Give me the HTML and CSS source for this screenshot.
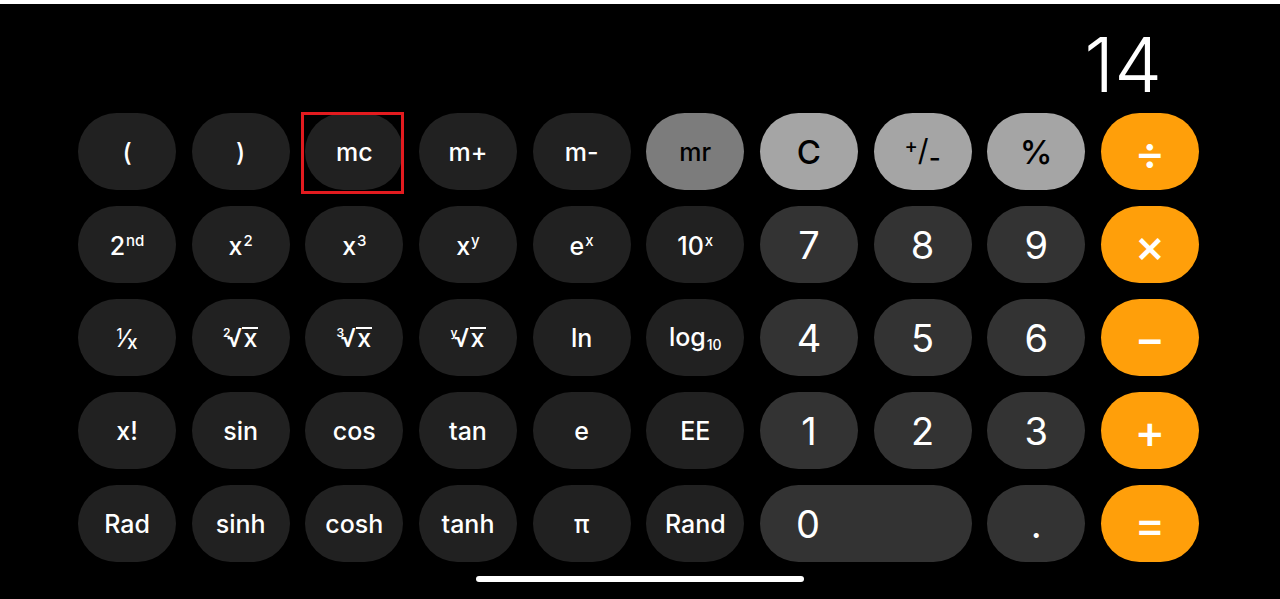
FILE: index.html
```html
<!DOCTYPE html>
<html lang="en">
<head>
<meta charset="utf-8">
<title>Calculator</title>
<link rel="stylesheet" href="styles.css">
</head>
<body>
<div class="topbar"></div>
<div class="display">14</div>
<div class="keys">
  <div class="key">(</div>
  <div class="key">)</div>
  <div class="key hl">mc</div>
  <div class="key">m+</div>
  <div class="key">m-</div>
  <div class="key mr">mr</div>
  <div class="key light big">C</div>
  <div class="key light"><span class="lbl"><span class="pm-plus">+</span><span class="pm-slash">/</span><span class="pm-minus">-</span></span></div>
  <div class="key light big">%</div>
  <div class="key op">÷</div>

  <div class="key"><span class="lbl">2<span class="sup">nd</span></span></div>
  <div class="key"><span class="lbl">x<span class="sup">2</span></span></div>
  <div class="key"><span class="lbl">x<span class="sup">3</span></span></div>
  <div class="key"><span class="lbl">x<span class="sup">y</span></span></div>
  <div class="key"><span class="lbl">e<span class="sup">x</span></span></div>
  <div class="key"><span class="lbl">10<span class="sup">x</span></span></div>
  <div class="key num">7</div>
  <div class="key num">8</div>
  <div class="key num">9</div>
  <div class="key op">×</div>

  <div class="key"><span class="lbl"><span class="frac-n">1</span><span class="frac-s">⁄</span><span class="frac-d">x</span></span></div>
  <div class="key"><span class="lbl"><span class="root-i">2</span><span class="root-r">√</span><span class="root-x">x</span></span></div>
  <div class="key"><span class="lbl"><span class="root-i">3</span><span class="root-r">√</span><span class="root-x">x</span></span></div>
  <div class="key"><span class="lbl"><span class="root-i">y</span><span class="root-r">√</span><span class="root-x">x</span></span></div>
  <div class="key">ln</div>
  <div class="key"><span class="lbl">log<span class="sub">10</span></span></div>
  <div class="key num">4</div>
  <div class="key num">5</div>
  <div class="key num">6</div>
  <div class="key op">−</div>

  <div class="key">x!</div>
  <div class="key">sin</div>
  <div class="key">cos</div>
  <div class="key">tan</div>
  <div class="key">e</div>
  <div class="key">EE</div>
  <div class="key num">1</div>
  <div class="key num">2</div>
  <div class="key num">3</div>
  <div class="key op">+</div>

  <div class="key">Rad</div>
  <div class="key">sinh</div>
  <div class="key">cosh</div>
  <div class="key">tanh</div>
  <div class="key">π</div>
  <div class="key">Rand</div>
  <div class="key num zero">0</div>
  <div class="key num dot">.</div>
  <div class="key op">=</div>
</div>
<div class="home"></div>
</body>
</html>
```
FILE: styles.css
```css
* { box-sizing: border-box; }
html, body { background: #000; }
body {
  margin: 0;
  height: 599px;
  overflow: hidden;
  font-family: Inter, "Noto Sans", "Liberation Sans", sans-serif;
  color: #fff;
}
.topbar { height: 4px; background: #fff; }
.display {
  height: 109px;
  padding: 22px 118px 0 0;
  text-align: right;
  font-size: 76px;
  font-weight: 300;
  line-height: 76px;
}
.keys {
  display: grid;
  grid-template-columns: repeat(10, 98px);
  grid-auto-rows: 77px;
  column-gap: 15.67px;
  row-gap: 16px;
  padding-left: 78px;
}
.key {
  position: relative;
  border-radius: 38.5px;
  display: flex;
  align-items: center;
  justify-content: center;
  background: #212121;
  color: #fff;
  font-size: 25px;
  font-weight: 500;
  line-height: 1;
  padding-top: 2px;
}
.lbl { white-space: nowrap; }
.num { background: #333333; font-size: 38px; font-weight: 400; padding-top: 0; }
.light { background: #a5a5a5; color: #000; }
.mr { background: #7c7c7c; color: #000; }
.big { font-size: 33px; }
.op { background: #ff9f0a; font-size: 46px; font-weight: 500; padding-top: 0; }
.zero { grid-column: span 2; justify-content: flex-start; padding-left: 36px; }
.dot { font-size: 38px; }
.hl::after {
  content: "";
  position: absolute;
  left: -4px;
  top: -1px;
  right: -1px;
  bottom: -4px;
  border: 3px solid #e31b1f;
}
.sup { font-size: 15px; vertical-align: 9px; margin-left: 1px; }
.sub { font-size: 14px; vertical-align: -4px; margin-left: 1px; }
.pm-plus { font-size: 20px; vertical-align: 8px; }
.pm-slash { font-size: 30px; font-weight: 400; }
.pm-minus { font-size: 26px; vertical-align: -6px; }
.frac-n { font-size: 14px; vertical-align: 8px; }
.frac-s { font-size: 24px; }
.frac-d { font-size: 19px; vertical-align: -2px; }
.root-i { font-size: 12px; font-weight: 600; vertical-align: 10px; margin-right: -4px; }
.root-r { font-size: 25px; }
.root-x { font-size: 25px; display: inline-block; border-top: 2px solid #fff; line-height: 19px; padding: 0 1px; }
.home {
  width: 328px;
  height: 6px;
  border-radius: 3px;
  background: #fff;
  margin: 14px auto 0;
}
```
